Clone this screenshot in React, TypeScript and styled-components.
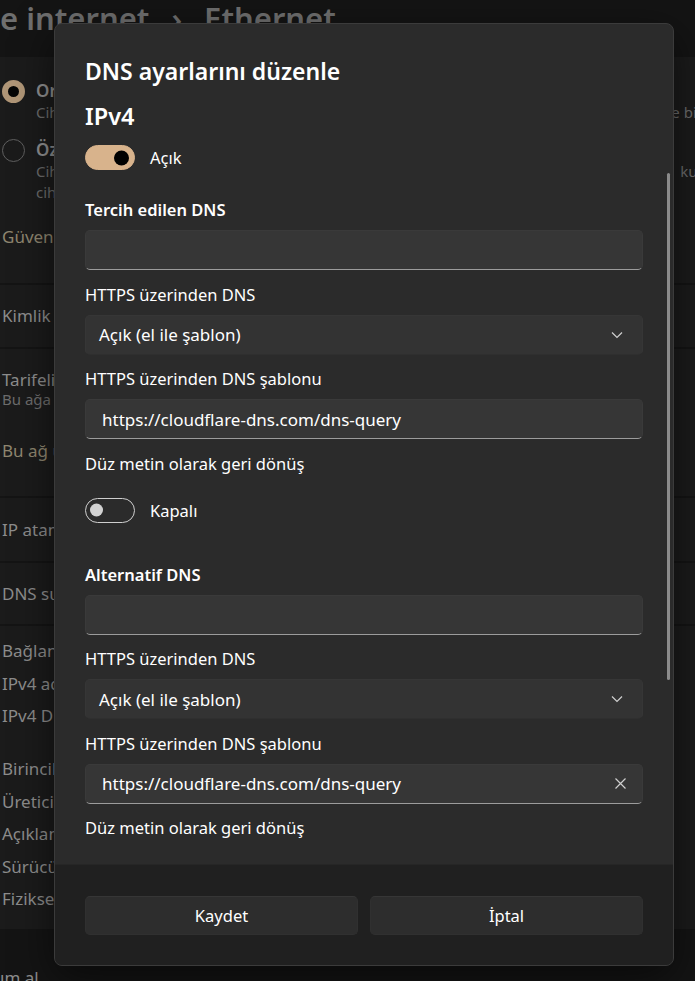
import styled, { createGlobalStyle } from "styled-components";

const UI = `"Segoe UI", "Noto Sans", "Open Sans", sans-serif`;

const GlobalStyle = createGlobalStyle`
  html, body {
    margin: 0;
    padding: 0;
    background: #141414;
  }
  body {
    font-family: ${UI};
    -webkit-font-smoothing: antialiased;
  }
`;

/* ---------- settings page behind the dialog (only its edges show) ---------- */

const Page = styled.div`
  position: relative;
  width: 695px;
  height: 981px;
  overflow: hidden;
  background: #141414;
  color: #8c8c8c;
  font-size: 17px;
`;

const Breadcrumb = styled.h1`
  margin: 0;
  height: 57px;
  display: flex;
  gap: 22px;
  font-size: 31px;
  line-height: 36px;
  font-weight: 600;
  color: #6f6f6f;
  white-space: nowrap;
`;

const Cards = styled.div`
  display: flex;
  flex-direction: column;
  gap: 2px;
`;

const Card = styled.div<{ $pad: string }>`
  background: #1b1b1b;
  padding: ${(p) => p.$pad};
  padding-left: 2px;
  display: flex;
  flex-direction: column;
  align-items: flex-start;
  white-space: nowrap;
`;

const Option = styled.div<{ $top?: number }>`
  display: flex;
  align-items: flex-start;
  gap: 11px;
  margin-top: ${(p) => p.$top ?? 0}px;
`;

const Radio = styled.span<{ $checked?: boolean }>`
  flex: none;
  width: 23px;
  height: 23px;
  box-sizing: border-box;
  border-radius: 50%;
  border: ${(p) => (p.$checked ? "6px solid #b09677" : "1px solid #5f5f5f")};
  background: ${(p) => (p.$checked ? "#050505" : "transparent")};
`;

const OptionText = styled.div`
  display: flex;
  flex-direction: column;
  align-items: flex-start;
`;

const OptionTitle = styled.span`
  line-height: 22px;
  font-weight: 600;
  color: #909090;
`;

/* a wrapped description line: its start shows left of the dialog, its end right of it */
const OptionDesc = styled.span<{ $width?: number }>`
  display: flex;
  justify-content: space-between;
  width: ${(p) => (p.$width ? `${p.$width}px` : "auto")};
  font-size: 15px;
  line-height: 21px;
  color: #6c6c6c;
`;

const RowText = styled.span<{ $top?: number }>`
  line-height: 22px;
  margin-top: ${(p) => p.$top ?? 0}px;
`;

const SubText = styled.span`
  font-size: 15px;
  line-height: 16px;
  color: #6c6c6c;
`;

const LinkText = styled.span<{ $top?: number }>`
  line-height: 22px;
  color: #8f8670;
  margin-top: ${(p) => p.$top ?? 0}px;
`;

const DetailList = styled.div`
  display: flex;
  flex-direction: column;
  gap: 10.5px;
`;

const DetailGroup = styled(DetailList)`
  margin-top: 31px;
`;

const HelpLink = styled.div`
  margin-top: 38px;
  line-height: 22px;
  color: #8c8c8c;
`;

/* ---------- dialog ---------- */

const Dialog = styled.div`
  position: absolute;
  left: 54px;
  top: 23px;
  width: 620px;
  height: 943px;
  box-sizing: border-box;
  display: flex;
  flex-direction: column;
  background: #2b2b2b;
  border: 1px solid #3b3b3b;
  border-radius: 8px;
  overflow: hidden;
  color: #ffffff;
  box-shadow: 0 12px 40px rgba(0, 0, 0, 0.55);
`;

const DialogBody = styled.div`
  position: relative;
  flex: 1;
  overflow: hidden;
  padding: 31px 30px 0;
  display: flex;
  flex-direction: column;
`;

const Title = styled.h2`
  margin: 0;
  font-size: 23px;
  line-height: 32px;
  font-weight: 600;
`;

const Heading = styled.h3`
  margin: 13px 0 0;
  font-size: 23.5px;
  line-height: 32px;
  font-weight: 600;
`;

const SwitchRow = styled.div<{ $top: number }>`
  display: flex;
  align-items: center;
  gap: 15px;
  margin-top: ${(p) => p.$top}px;
  font-size: 16.5px;
`;

const Switch = styled.span<{ $on?: boolean }>`
  position: relative;
  flex: none;
  width: 50px;
  height: 25px;
  box-sizing: border-box;
  border-radius: 13px;
  background: ${(p) => (p.$on ? "#d8b38c" : "transparent")};
  border: 1px solid ${(p) => (p.$on ? "#d8b38c" : "#cfcfcf")};

  &::after {
    content: "";
    position: absolute;
    top: 50%;
    left: ${(p) => (p.$on ? "28px" : "4px")};
    width: ${(p) => (p.$on ? 15 : 13)}px;
    height: ${(p) => (p.$on ? 15 : 13)}px;
    border-radius: 50%;
    background: ${(p) => (p.$on ? "#000000" : "#d2d2d2")};
    transform: translateY(-50%);
  }
`;

const Group = styled.div<{ $top: number }>`
  display: flex;
  flex-direction: column;
  gap: 12.5px;
  margin-top: ${(p) => p.$top}px;
`;

const FieldWrap = styled.div`
  display: flex;
  flex-direction: column;
  gap: 8px;
`;

const FieldLabel = styled.span<{ $strong?: boolean }>`
  font-size: 16.5px;
  line-height: 24px;
  font-weight: ${(p) => (p.$strong ? 600 : 400)};
`;

const Control = styled.div<{ $underline?: boolean }>`
  position: relative;
  height: 40px;
  box-sizing: border-box;
  display: flex;
  align-items: center;
  border-radius: 5px;
  background: ${(p) => (p.$underline ? "#363636" : "#333333")};
  border: 1px solid ${(p) => (p.$underline ? "#3a3a3a" : "#363636")};
  border-bottom: 1px solid ${(p) => (p.$underline ? "#9c9c9c" : "#2f2f2f")};
  font-size: 17px;
`;

const ControlText = styled.span<{ $inset: number }>`
  flex: 1;
  padding-left: ${(p) => p.$inset}px;
  white-space: nowrap;
`;

const ControlIcon = styled.svg<{ $right: number }>`
  flex: none;
  margin-right: ${(p) => p.$right}px;
`;

const ScrollThumb = styled.div`
  position: absolute;
  right: 3px;
  top: 149px;
  width: 3px;
  height: 507px;
  border-radius: 2px;
  background: #8b8b8b;
`;

const Footer = styled.div`
  flex: none;
  height: 101px;
  box-sizing: border-box;
  padding: 31px 30px 0;
  background: #202020;
  border-top: 1px solid #262626;
  display: grid;
  grid-template-columns: 1fr 1fr;
  gap: 12px;
  align-items: start;
`;

const FooterButton = styled.button`
  height: 39px;
  border-radius: 5px;
  border: 1px solid #303030;
  border-top-color: #363636;
  background: #2d2d2d;
  color: #ffffff;
  font-family: ${UI};
  font-size: 16.5px;
`;

const Chevron = () => (
  <ControlIcon $right={19} width="12" height="8" viewBox="0 0 12 8">
    <path d="M1 1.5 L6 6.5 L11 1.5" fill="none" stroke="#d0d0d0" strokeWidth="1.2" />
  </ControlIcon>
);

const ClearIcon = () => (
  <ControlIcon $right={16} width="11" height="11" viewBox="0 0 11 11">
    <path d="M0.5 0.5 L10.5 10.5 M10.5 0.5 L0.5 10.5" fill="none" stroke="#cfcfcf" strokeWidth="1.2" />
  </ControlIcon>
);

type FieldProps = { label: string; strong?: boolean; children: React.ReactNode };

const Field = ({ label, strong, children }: FieldProps) => (
  <FieldWrap>
    <FieldLabel $strong={strong}>{label}</FieldLabel>
    {children}
  </FieldWrap>
);

const TEMPLATE = "https://cloudflare-dns.com/dns-query";

const DnsBlock = ({ heading, clearable }: { heading: string; clearable?: boolean }) => (
  <>
    <Field label={heading} strong>
      <Control $underline />
    </Field>
    <Field label="HTTPS üzerinden DNS">
      <Control>
        <ControlText $inset={13}>Açık (el ile şablon)</ControlText>
        <Chevron />
      </Control>
    </Field>
    <Field label="HTTPS üzerinden DNS şablonu">
      <Control $underline>
        <ControlText $inset={16}>{TEMPLATE}</ControlText>
        {clearable && <ClearIcon />}
      </Control>
    </Field>
    <FieldLabel>Düz metin olarak geri dönüş</FieldLabel>
  </>
);

const App = () => {
  return (
    <>
      <GlobalStyle />
      <Page>
        <Breadcrumb>
          <span>e internet</span>
          <span>›</span>
          <span>Ethernet</span>
        </Breadcrumb>
        <Cards>
          <Card $pad="23px 0 35px">
            <Option>
              <Radio $checked />
              <OptionText>
                <OptionTitle>Ortak</OptionTitle>
                <OptionDesc $width={667}>
                  <span>Cihaz</span>
                  <span>e bir</span>
                </OptionDesc>
              </OptionText>
            </Option>
            <Option $top={16}>
              <Radio />
              <OptionText>
                <OptionTitle>Özel</OptionTitle>
                <OptionDesc $width={685}>
                  <span>Cihazınız</span>
                  <span>kuran</span>
                </OptionDesc>
                <OptionDesc>cihazları</OptionDesc>
              </OptionText>
            </Option>
            <LinkText $top={23}>Güvenlik</LinkText>
          </Card>
          <Card $pad="20px 0">
            <RowText>Kimlik do</RowText>
          </Card>
          <Card $pad="20px 0 34px">
            <RowText>Tarifeli</RowText>
            <SubText>Bu ağa bağ</SubText>
            <LinkText $top={33}>Bu ağ üz</LinkText>
          </Card>
          <Card $pad="21px 0 20px">
            <RowText>IP ataması</RowText>
          </Card>
          <Card $pad="20px 0 19px">
            <RowText>DNS sunucu</RowText>
          </Card>
          <Card $pad="14px 0 19px">
            <DetailList>
              <RowText>Bağlantı</RowText>
              <RowText>IPv4 adresi</RowText>
              <RowText>IPv4 DNS</RowText>
            </DetailList>
            <DetailGroup>
              <RowText>Birincil</RowText>
              <RowText>Üretici:</RowText>
              <RowText>Açıklama</RowText>
              <RowText>Sürücü</RowText>
              <RowText>Fiziksel</RowText>
            </DetailGroup>
          </Card>
        </Cards>
        <HelpLink>ım al</HelpLink>

        <Dialog>
          <DialogBody>
            <Title>DNS ayarlarını düzenle</Title>
            <Heading>IPv4</Heading>
            <SwitchRow $top={13}>
              <Switch $on />
              <span>Açık</span>
            </SwitchRow>
            <Group $top={28}>
              <DnsBlock heading="Tercih edilen DNS" />
            </Group>
            <SwitchRow $top={22}>
              <Switch />
              <span>Kapalı</span>
            </SwitchRow>
            <Group $top={40}>
              <DnsBlock heading="Alternatif DNS" clearable />
            </Group>
            <ScrollThumb />
          </DialogBody>
          <Footer>
            <FooterButton>Kaydet</FooterButton>
            <FooterButton>İptal</FooterButton>
          </Footer>
        </Dialog>
      </Page>
    </>
  );
};

export default App;
